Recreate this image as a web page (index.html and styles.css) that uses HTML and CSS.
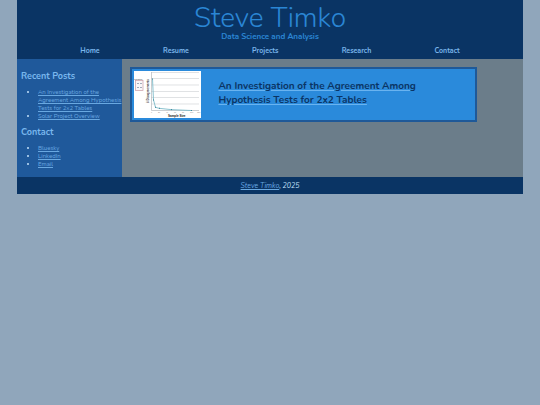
FILE: index.html
```html
<!DOCTYPE html>
<html lang="en">
<head>
<meta charset="utf-8">
<meta name="viewport" content="width=device-width, initial-scale=1">
<title>Steve Timko</title>
<link rel="stylesheet" href="styles.css">
</head>
<body>
<div class="page">
  <header class="header">
    <h1>Steve Timko</h1>
    <p class="tagline">Data Science and Analysis</p>
    <nav class="nav">
      <a href="#">Home</a>
      <a href="#">Resume</a>
      <a href="#">Projects</a>
      <a href="#">Research</a>
      <a href="#">Contact</a>
    </nav>
  </header>
  <div class="content">
    <aside class="sidebar">
      <h2>Recent Posts</h2>
      <ul>
        <li><a href="#">An Investigation of the Agreement Among Hypothesis Tests for 2x2 Tables</a></li>
        <li><a href="#">Solar Project Overview</a></li>
      </ul>
      <h2>Contact</h2>
      <ul>
        <li><a href="#">Bluesky</a></li>
        <li><a href="#">LinkedIn</a></li>
        <li><a href="#">Email</a></li>
      </ul>
    </aside>
    <main class="main">
      <article class="card">
        <svg class="chart" viewBox="0 0 67 47" role="img" aria-label="Disagreements by sample size">
          <rect width="67" height="47" fill="#fff"/>
          <path d="M17 1.5H65M17 7.5H65M17 14H65M17 20.5H65M17 26.5H65M17 33H65" stroke="#d3d5d8" stroke-width="0.7"/>
          <path d="M17.5 1V39.5H65" fill="none" stroke="#b5b9bd" stroke-width="0.7"/>
          <path d="M18.5 8L19.5 29L21.5 36.3L25 37.3L37 38.6L57 39.5" fill="none" stroke="#7dbbc9" stroke-width="0.9"/>
          <path d="M18 8h1M19 29h1M21 36.3h1M25 37.3h1M37 38.6h1M57 39.5h1" stroke="#3d8799" stroke-width="1"/>
          <rect x="1.5" y="9.5" width="7.5" height="10" fill="#faf7f9" stroke="#c99da7" stroke-width="0.7"/>
          <path d="M3 12.5h2M6 12.5h2M3 16.5h2M6 16.5h2" stroke="#8e98aa" stroke-width="0.8"/>
          <text x="0" y="8.5" font-size="2" fill="#444">Condition</text>
          <text x="-32" y="15" transform="rotate(-90)" font-size="3" font-weight="700" fill="#333"># Disagreements</text>
          <text x="34" y="46" font-size="3" font-weight="700" fill="#222">Sample Size</text>
          <g font-size="2" fill="#888"><text x="17" y="42">0</text><text x="24" y="42">20</text><text x="32" y="42">40</text><text x="40" y="42">60</text><text x="48" y="42">80</text><text x="56" y="42">100</text><text x="63" y="42">120</text></g>
        </svg>
        <h2><a href="#">An Investigation of the Agreement Among Hypothesis Tests for 2x2 Tables</a></h2>
      </article>
    </main>
  </div>
  <footer class="footer"><a href="#">Steve Timko</a>, 2025</footer>
</div>
</body>
</html>
```
FILE: styles.css
```css
* { box-sizing: border-box; }
body {
  margin: 0;
  background: #90a6bb;
  color: #c3e0fa;
  font-family: Nunito, Lato, "Open Sans", sans-serif;
  font-size: 6px;
}
h1, h2, p, ul { margin: 0; }
.page { margin: 0 17px; }
.header {
  background: #0a3464;
  text-align: center;
  padding-top: 4px;
}
h1 {
  color: #2a86d4;
  font-size: 28px;
  line-height: 29px;
  font-weight: 300;
}
.tagline {
  color: #2a86d4;
  font-size: 8px;
  line-height: 8px;
  font-weight: 700;
}
.nav {
  display: flex;
  justify-content: space-evenly;
  padding: 6px 0 4px;
}
.nav a {
  color: #79b5ea;
  font-size: 7px;
  line-height: 8px;
  font-weight: 700;
  text-decoration: none;
}
.content {
  display: grid;
  grid-template-columns: 5fr 19fr;
}
.sidebar {
  background: #1f599b;
  padding: 12px 0 9px 4px;
}
.sidebar h2 {
  color: #7ab8ee;
  font-size: 9px;
  line-height: 11px;
  font-weight: 700;
}
.sidebar ul {
  padding-left: 17px;
  margin: 6px 0 7px;
}
.sidebar ul:last-child { margin-bottom: 0; }
.sidebar li { line-height: 8px; }
.sidebar a, .footer a { color: #69a8e1; }
.main {
  background: #6b7d8a;
  padding: 8px;
}
.card {
  display: flex;
  align-items: center;
  gap: 17px;
  width: 90%;
  padding: 2px;
  border: 2px solid #1f5998;
  background: #2a8adb;
}
.chart {
  flex: none;
  width: 67px;
  height: 47px;
  font-family: "Liberation Sans", sans-serif;
}
.card h2 {
  font-size: 10px;
  line-height: 14px;
  font-weight: 700;
  padding: 0 48px 4px 0;
}
.card a {
  color: #0a3464;
  text-decoration-color: #69b3f0;
}
.footer {
  background: #0a3464;
  padding: 4px;
  text-align: center;
  font-size: 7px;
  line-height: 9px;
  font-style: italic;
}
```
